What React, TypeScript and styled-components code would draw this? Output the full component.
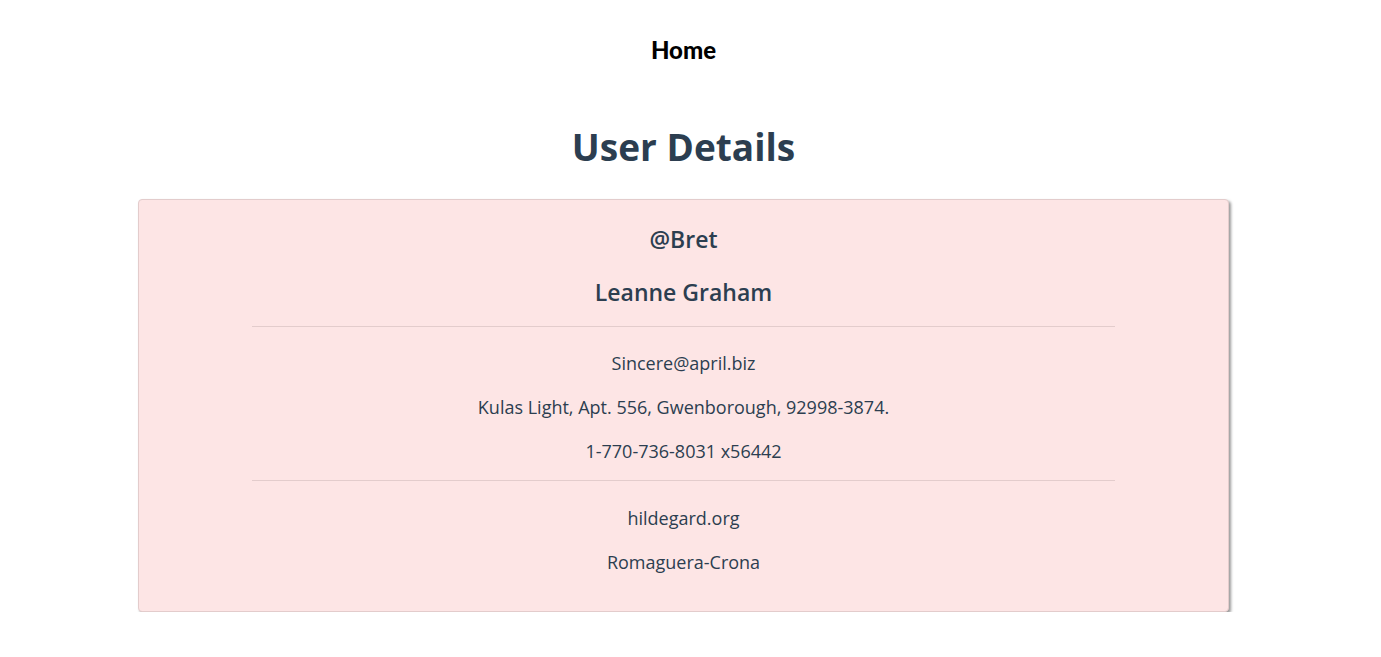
import React from "react";
import styled, { createGlobalStyle } from "styled-components";

const GlobalStyle = createGlobalStyle`
  html, body { margin: 0; padding: 0; background: #ffffff; }
  body {
    font-family: "Open Sans", "Noto Sans", sans-serif;
    color: #2c3e50;
    -webkit-font-smoothing: antialiased;
  }
`;

const Page = styled.div`
  width: 1367px;
  display: flex;
  flex-direction: column;
  align-items: center;
`;

const Nav = styled.nav`
  padding-top: 36px;
  height: 62px;
  box-sizing: border-box;
  display: flex;
  justify-content: center;
`;

const NavLink = styled.a`
  font-family: "Lato", "Open Sans", sans-serif;
  font-weight: 900;
  font-size: 24px;
  line-height: 28px;
  color: #000000;
  text-decoration: none;
`;

const Title = styled.h1`
  margin: 60px 0 0;
  font-size: 37px;
  line-height: 50px;
  font-weight: 700;
  color: #2c3e50;
`;

const Card = styled.section`
  margin-top: 27px;
  width: 1091px;
  box-sizing: border-box;
  background: #fde5e5;
  border: 1px solid #e3cccc;
  border-radius: 4px;
  box-shadow: 2px 2px 3px rgba(0, 0, 0, 0.4);
  padding: 21px 0 37px;
  display: flex;
  flex-direction: column;
  align-items: center;
  text-align: center;
`;

const Handle = styled.h2`
  margin: 0;
  font-size: 23px;
  line-height: 36px;
  font-weight: 600;
`;

const Name = styled.h3`
  margin: 18px 0 0;
  font-size: 23px;
  line-height: 34px;
  font-weight: 600;
`;

const Divider = styled.hr<{ $gap: number }>`
  width: 863px;
  border: 0;
  border-top: 1px solid #e3cccc;
  margin: ${(p) => p.$gap}px 0 0;
`;

const Line = styled.p<{ $top: number }>`
  margin: ${(p) => p.$top}px 0 0;
  font-size: 18px;
  line-height: 24px;
  color: #2c3e50;
`;

export default function App() {
  return (
    <>
      <GlobalStyle />
      <Page>
        <Nav>
          <NavLink href="#">Home</NavLink>
        </Nav>
        <Title>User Details</Title>
        <Card>
          <Handle>@Bret</Handle>
          <Name>Leanne Graham</Name>
          <Divider $gap={17} />
          <Line $top={24}>Sincere@april.biz</Line>
          <Line $top={20}>Kulas Light, Apt. 556, Gwenborough, 92998-3874.</Line>
          <Line $top={20}>1-770-736-8031 x56442</Line>
          <Divider $gap={17} />
          <Line $top={25}>hildegard.org</Line>
          <Line $top={20}>Romaguera-Crona</Line>
        </Card>
      </Page>
    </>
  );
}
